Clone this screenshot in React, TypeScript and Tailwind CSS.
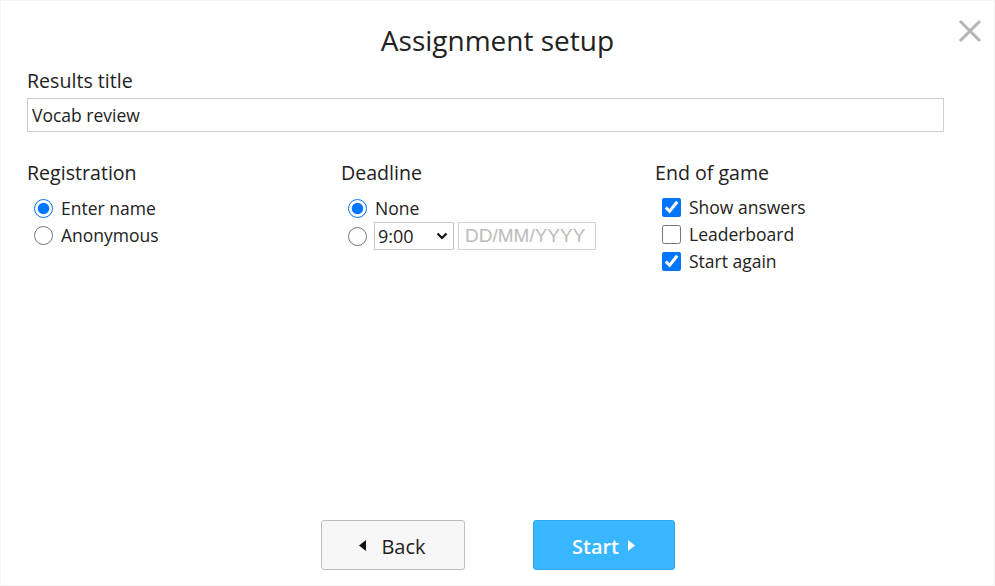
import { useState } from 'react';

const font = { fontFamily: '"Open Sans", "Noto Sans", sans-serif' };

function CloseIcon() {
  return (
    <svg width="24" height="24" viewBox="0 0 24 24" fill="none" stroke="#b5b5b5" strokeWidth={3}>
      <path d="M2 2L22 22M22 2L2 22" />
    </svg>
  );
}

function Chevron() {
  return (
    <svg width="12" height="8" viewBox="0 0 12 8" fill="none" stroke="#111" strokeWidth={2.2}>
      <path d="M1.5 1.5L6 6L10.5 1.5" />
    </svg>
  );
}

function Radio({ checked, onChange }: { checked: boolean; onChange: () => void }) {
  return (
    <input
      type="radio"
      checked={checked}
      onChange={onChange}
      className="w-[19px] h-[19px] m-0 accent-[#0075ff]"
    />
  );
}

export default function App() {
  const [reg, setReg] = useState('name');
  const [deadline, setDeadline] = useState('none');
  const [opts, setOpts] = useState({ answers: true, leaderboard: false, again: true });

  return (
    <div style={font} className="relative h-[586px] w-full bg-white border border-[#f4f4f4] flex flex-col text-[#222]">
      <button className="absolute right-[12px] top-[18px]">
        <CloseIcon />
      </button>

      <h1 className="text-[28px] leading-[38px] text-center mt-[20px]">Assignment setup</h1>

      <div className="px-[26px] mt-[8px]">
        <label className="block text-[19.6px] leading-[28px]">Results title</label>
        <input
          defaultValue="Vocab review"
          className="mt-[3px] w-[917px] h-[34px] border border-[#cccccc] px-[4px] text-[17.5px] outline-none"
        />

        <div className="grid grid-cols-[314px_314px_1fr] mt-[27px]">
          <div>
            <h2 className="text-[19.6px] leading-[28px]">Registration</h2>
            <div className="mt-[9px] flex flex-col gap-[2px] pl-[7px] text-[17.5px] leading-[25px]">
              <label className="flex items-center gap-[8px]">
                <Radio checked={reg === 'name'} onChange={() => setReg('name')} />
                Enter name
              </label>
              <label className="flex items-center gap-[8px]">
                <Radio checked={reg === 'anon'} onChange={() => setReg('anon')} />
                Anonymous
              </label>
            </div>
          </div>

          <div>
            <h2 className="text-[19.6px] leading-[28px]">Deadline</h2>
            <div className="mt-[9px] flex flex-col gap-[1px] pl-[7px] text-[17.5px] leading-[25px]">
              <label className="flex items-center gap-[8px]">
                <Radio checked={deadline === 'none'} onChange={() => setDeadline('none')} />
                None
              </label>
              <div className="flex items-center">
                <Radio checked={deadline === 'date'} onChange={() => setDeadline('date')} />
                <div className="ml-[7px] w-[80px] h-[28px] border border-[#c8c8c8] flex items-center justify-between pl-[3px] pr-[5px] text-[18px]">
                  <span>9:00</span>
                  <Chevron />
                </div>
                <input
                  placeholder="DD/MM/YYYY"
                  className="ml-[4px] w-[138px] h-[28px] border border-[#d4d4d4] px-[6px] text-[19px] placeholder:text-[#bbbbbb] outline-none"
                  style={{ fontFamily: '"Liberation Sans", Arial, sans-serif' }}
                />
              </div>
            </div>
          </div>

          <div>
            <h2 className="text-[19.6px] leading-[28px]">End of game</h2>
            <div className="mt-[8px] flex flex-col gap-[2px] pl-[7px] text-[17.5px] leading-[25px]">
              <label className="flex items-center gap-[8px]">
                <input
                  type="checkbox"
                  checked={opts.answers}
                  onChange={() => setOpts({ ...opts, answers: !opts.answers })}
                  className="w-[19px] h-[19px] m-0 accent-[#0075ff]"
                />
                Show answers
              </label>
              <label className="flex items-center gap-[8px]">
                <input
                  type="checkbox"
                  checked={opts.leaderboard}
                  onChange={() => setOpts({ ...opts, leaderboard: !opts.leaderboard })}
                  className="w-[19px] h-[19px] m-0 accent-[#0075ff]"
                />
                Leaderboard
              </label>
              <label className="flex items-center gap-[8px]">
                <input
                  type="checkbox"
                  checked={opts.again}
                  onChange={() => setOpts({ ...opts, again: !opts.again })}
                  className="w-[19px] h-[19px] m-0 accent-[#0075ff]"
                />
                Start again
              </label>
            </div>
          </div>
        </div>
      </div>

      <div className="mt-auto mb-[15px] flex justify-center gap-[68px]">
        <button className="w-[144px] h-[50px] pt-[4px] bg-[#f7f7f7] border border-[#bdbdbd] rounded-[3px] flex items-center justify-center gap-[15px] text-[20px] text-[#222]">
          <svg width="7" height="11" viewBox="0 0 7 11" fill="#111" className="-mt-[4px]">
            <path d="M7 0V11L0 5.5Z" />
          </svg>
          Back
        </button>
        <button className="w-[142px] h-[50px] pt-[4px] bg-[#38b6ff] border border-[#2fa8ef] rounded-[3px] flex items-center justify-center gap-[9px] text-[20px] font-semibold text-white">
          Start
          <svg width="7" height="11" viewBox="0 0 7 11" fill="#fff" className="-mt-[4px]">
            <path d="M0 0V11L7 5.5Z" />
          </svg>
        </button>
      </div>
    </div>
  );
}
